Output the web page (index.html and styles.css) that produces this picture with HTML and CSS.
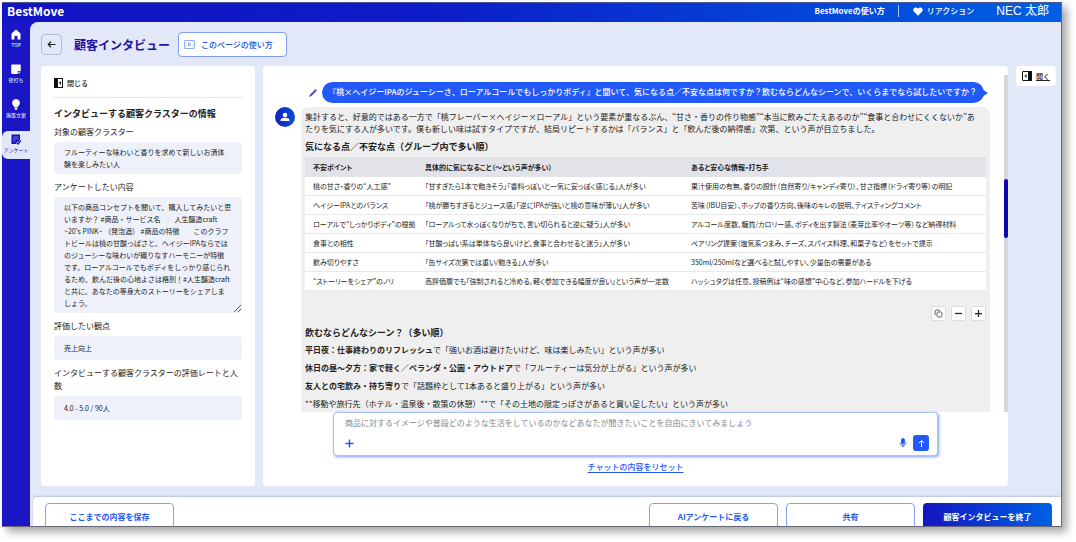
FILE: index.html
```html
<!DOCTYPE html>
<html lang="ja">
<head>
    <meta charset="UTF-8">
    <meta name="viewport" content="width=device-width, initial-scale=1.0">
    <title>顧客インタビュー - BestMove</title>
    <link rel="stylesheet" href="styles.css">
</head>
<body>
    <div class="app">
        <header class="header">
            <span class="logo">BestMove</span>
            <nav class="header-nav">
                <a href="#" class="help-link">BestMoveの使い方</a>
                <a href="#" class="reaction-link">
                    <svg width="10" height="9" viewBox="0 0 20 18" fill="#fff"><path d="M10 17.500 2 9.600C-2.200 4.600 4-2.800 10 3c6-5.800 12.200 1.600 8 6.600z"/></svg>
                    リアクション
                </a>
                <span class="user-name">NEC 太郎</span>
            </nav>
        </header>

        <div class="body">
            <nav class="sidebar">
                <a href="#" class="side-item">
                    <svg width="10" height="11" viewBox="0 0 20 22" fill="#fff"><path d="M10 1 1 9v12h6v-7h6v7h6V9z"/></svg>
                    TOP
                </a>
                <a href="#" class="side-item">
                    <svg width="10" height="11" viewBox="0 0 20 22" fill="#fff"><path d="M2 1h16a1.500 1.500 0 0 1 1.500 1.500V14h-6v6H2A1.500 1.500 0 0 1 .5 18.500v-16A1.500 1.500 0 0 1 2 1z"/><path d="M15 15.500h4.500L15 20z"/></svg>
                    壁打ち
                </a>
                <a href="#" class="side-item">
                    <svg width="10" height="11" viewBox="0 0 20 22" fill="#fff"><path d="M10 0a8 8 0 0 1 4.500 14.500L13 17H7l-1.500-2.500A8 8 0 0 1 10 0z"/><path d="M7.500 18h5v2l-1.500 2H9l-1.500-2z"/></svg>
                    施策立案
                </a>
                <a href="#" class="side-item active">
                    <svg width="10" height="11" viewBox="0 0 20 22"><path d="M1 1h17v12l-6 7H1z" fill="#1510b8"/><path d="M4 6h11M4 10h11M4 14h5" stroke="#8f98e8" stroke-width="1.500"/><path d="m11 17 3 3 6-7" fill="none" stroke="#e2e8f8" stroke-width="5"/><path d="m11 17 3 3 6-7" fill="none" stroke="#1510b8" stroke-width="2.500"/></svg>
                    アンケート
                </a>
            </nav>

            <main class="main">
                <div class="page-head">
                    <button class="back-btn" aria-label="戻る">
                        <svg width="9" height="9" viewBox="0 0 18 18" fill="none" stroke="#222" stroke-width="2.400"><path d="M17 9H3M8 3.500 2.500 9 8 14.500"/></svg>
                    </button>
                    <h1 class="page-title">顧客インタビュー</h1>
                    <button class="guide-btn">
                        <svg width="11" height="9" viewBox="0 0 22 18" fill="none" stroke="#6f8df5" stroke-width="1.500"><rect x="1" y="1" width="20" height="16" rx="1.500"/><path d="M4 1v16M18 1v16" stroke-width="1" stroke-dasharray="2 2"/><path d="m9 6 5 3-5 3z"/></svg>
                        このページの使い方
                    </button>
                </div>

                <div class="columns">
                    <section class="panel info-panel">
                        <button class="close-btn">
                            <svg width="9" height="10" viewBox="0 0 18 20"><rect x="1" y="1" width="16" height="18" fill="none" stroke="#111" stroke-width="2"/><path d="M0 0h8v20H0z" fill="#111"/><path d="m14 6-4 4 4 4z" fill="#111"/></svg>
                            閉じる
                        </button>
                        <h2 class="info-title">インタビューする顧客クラスターの情報</h2>
                        <label class="field-label" for="cluster">対象の顧客クラスター</label>
                        <textarea class="field" id="cluster" rows="2" readonly>フルーティーな味わいと香りを求めて新しいお漬体
験を楽しみたい人</textarea>
                        <label class="field-label" for="content">アンケートしたい内容</label>
                        <textarea class="field resizable" id="content" rows="9">以下の商品コンセプトを聞いて、購入してみたいと思
いますか？ #商品・サービス名　　人生醸造craft
~20’s PINK~ （発泡酒） #商品の特徴　　このクラフ
トビールは桃の甘酸っぱさと、ヘイジーIPAならでは
のジューシーな味わいが織りなすハーモニーが特徴
です。ローアルコールでもボディをしっかり感じられ
るため、飲んだ後の心地よさは格別！#人生醸造craft
と共に、あなたの等身大のストーリーをシェアしま
しょう。</textarea>
                        <label class="field-label" for="viewpoint">評価したい観点</label>
                        <input class="field" id="viewpoint" type="text" value="売上向上">
                        <label class="field-label" for="rate">インタビューする顧客クラスターの評価レートと人数</label>
                        <input class="field" id="rate" type="text" value="4.0 - 5.0 / 90人">
                    </section>

                    <section class="panel chat-panel">
                        <div class="chat-view">
                            <div class="chat-log">
                                <div class="question-row">
                                    <svg width="10" height="10" viewBox="0 0 20 20"><path d="m2 18 2-5L15 2l3 3L7 16z" fill="#5a4fc0"/></svg>
                                    <p class="question">『桃×ヘイジーIPAのジューシーさ、ローアルコールでもしっかりボディ』と聞いて、気になる点／不安な点は何ですか？飲むならどんなシーンで、いくらまでなら試したいですか？</p>
                                </div>
                                <div class="answer-row">
                                    <span class="avatar">
                                        <svg width="10" height="10" viewBox="0 0 20 20" fill="#fff"><circle cx="10" cy="6" r="4.500"/><path d="M1 18v-2c0-3 5-4.500 9-4.500s9 1.500 9 4.500v2z"/></svg>
                                    </span>
                                    <div class="answer">
                                        <p class="summary">集計すると、好意的ではある一方で「桃フレーバー×ヘイジー×ローアル」という要素が重なるぶん、“甘さ・香りの作り物感”“本当に飲みごたえあるのか”“食事と合わせにくくないか”あたりを気にする人が多いです。僕も新しい味は試すタイプですが、結局リピートするかは「バランス」と「飲んだ後の納得感」次第、という声が目立ちました。</p>
                                        <h3>気になる点／不安な点（グループ内で多い順）</h3>
                                        <table class="points">
                                            <thead>
                                                <tr><th>不安ポイント</th><th>具体的に気になること（〜という声が多い）</th><th>あると安心な情報・打ち手</th></tr>
                                            </thead>
                                            <tbody>
                                                <tr><td>桃の甘さ・香りの“人工感”</td><td>「甘すぎたら1本で飽きそう」「香料っぽいと一気に安っぽく感じる」人が多い</td><td>果汁使用の有無、香りの設計（自然寄り/キャンディ寄り）、甘さ指標（ドライ寄り等）の明記</td></tr>
                                                <tr><td>ヘイジーIPAとのバランス</td><td>「桃が勝ちすぎるとジュース感」「逆にIPAが強いと桃の意味が薄い」人が多い</td><td>苦味（IBU目安）、ホップの香り方向、後味のキレの説明、テイスティングコメント</td></tr>
                                                <tr><td>ローアルで“しっかりボディ”の根拠</td><td>「ローアルって水っぽくなりがちで、言い切られると逆に疑う」人が多い</td><td>アルコール度数、糖質/カロリー感、ボディを出す製法（麦芽比率やオーツ等）など納得材料</td></tr>
                                                <tr><td>食事との相性</td><td>「甘酸っぱい系は単体なら良いけど、食事と合わせると迷う」人が多い</td><td>ペアリング提案（塩気系つまみ、チーズ、スパイス料理、和菓子など）をセットで提示</td></tr>
                                                <tr><td>飲み切りやすさ</td><td>「缶サイズ次第では重い/飽きる」人が多い</td><td>350ml/250mlなど選べると試しやすい、少量缶の需要がある</td></tr>
                                                <tr><td>“ストーリーをシェア”のノリ</td><td>高評価層でも「強制されると冷める。軽く参加できる幅度が良い」という声が一定数</td><td>ハッシュタグは任意、投稿例は“味の感想”中心など、参加ハードルを下げる</td></tr>
                                            </tbody>
                                        </table>
                                        <div class="table-tools">
                                            <button aria-label="コピー"><svg width="9" height="9" viewBox="0 0 18 18" fill="none" stroke="#333" stroke-width="1.600"><rect x="6" y="6" width="10" height="10" rx="2.500"/><path d="M4 11.500A2.500 2.500 0 0 1 2 9V4.500A2.500 2.500 0 0 1 4.500 2H9a2.500 2.500 0 0 1 2.500 2"/></svg></button>
                                            <button aria-label="縮小"><svg width="9" height="9" viewBox="0 0 18 18" stroke="#222" stroke-width="2.500"><path d="M2 9h14"/></svg></button>
                                            <button aria-label="拡大"><svg width="9" height="9" viewBox="0 0 18 18" stroke="#222" stroke-width="2.500"><path d="M2 9h14M9 2v14"/></svg></button>
                                        </div>
                                        <h3>飲むならどんなシーン？（多い順）</h3>
                                        <ul class="scenes">
                                            <li><b>平日夜：仕事終わりのリフレッシュ</b>で「強いお酒は避けたいけど、味は楽しみたい」という声が多い</li>
                                            <li><b>休日の昼〜夕方：家で軽く／ベランダ・公園・アウトドア</b>で「フルーティーは気分が上がる」という声が多い</li>
                                            <li><b>友人との宅飲み・持ち寄り</b>で「話題枠として1本あると盛り上がる」という声が多い</li>
                                            <li>**移動や旅行先（ホテル・温泉後・散策の休憩）**で「その土地の限定っぽさがあると買い足したい」という声が多い</li>
                                        </ul>
                                    </div>
                                </div>
                            </div>
                            <div class="scrollbar"><div class="scroll-thumb"></div></div>
                        </div>
                        <form class="composer">
                            <input class="message" type="text" aria-label="メッセージ" placeholder="商品に対するイメージや普段どのような生活をしているのかなどあなたが聞きたいことを自由にきいてみましょう">
                            <div class="composer-tools">
                                <button type="button" class="icon-btn add-btn" aria-label="追加"><svg width="9" height="9" viewBox="0 0 18 18" stroke="#2259f5" stroke-width="2.800"><path d="M1 9h16M9 1v16"/></svg></button>
                                <button type="button" class="icon-btn" aria-label="音声入力"><svg width="8" height="10" viewBox="0 0 16 20" fill="none" stroke="#2259f5" stroke-width="1.800"><rect x="5" y="1" width="6" height="11" rx="3" fill="#2259f5"/><path d="M2 9c0 8 12 8 12 0M8 15v4"/></svg></button>
                                <button type="button" class="send-btn" aria-label="送信"><svg width="9" height="9" viewBox="0 0 18 18" fill="none" stroke="#fff" stroke-width="2"><path d="M9 16V3M4 8l5-5 5 5"/></svg></button>
                            </div>
                        </form>
                        <a href="#" class="reset-link">チャットの内容をリセット</a>
                    </section>

                    <button class="open-btn">
                        <svg width="10" height="10" viewBox="0 0 20 20"><rect x="1" y="1" width="18" height="18" rx="1" fill="none" stroke="#111" stroke-width="2"/><path d="M12 0h8v20h-8z" fill="#111"/><path d="m9 6-4 4 4 4z" fill="#111"/></svg>
                        開く
                    </button>
                </div>

                <footer class="footer">
                    <button class="btn save-btn">ここまでの内容を保存</button>
                    <button class="btn">AIアンケートに戻る</button>
                    <button class="btn">共有</button>
                    <button class="btn finish-btn">顧客インタビューを終了</button>
                </footer>
            </main>
        </div>
    </div>
</body>
</html>
```

FILE: styles.css
```css
* {
    margin: 0;
    padding: 0;
    box-sizing: border-box;
}

body {
    height: 100vh;
    padding: 2px 14px 15px 2px;
    background-color: #fff;
    color: #222;
    font-family: "Noto Sans CJK JP", sans-serif;
    font-size: 8px;
    line-height: 12px;
    overflow: hidden;
}

button,
input,
textarea {
    font: inherit;
    color: inherit;
    border: none;
    background: none;
}

button {
    display: flex;
    align-items: center;
    justify-content: center;
    cursor: pointer;
}

a {
    color: inherit;
    text-decoration: none;
}

svg {
    display: block;
    flex: none;
}

.app {
    height: 100%;
    display: flex;
    flex-direction: column;
    overflow: hidden;
    border-top: 1px solid #4a5a90;
    border-right: 1px solid #667;
    border-bottom: 1px solid #667;
    background: linear-gradient(90deg, #1414c4, #0c1cc8 40%, #0060e4);
    box-shadow: 5px 5px 8px rgba(0, 0, 0, 0.35);
}

/* ヘッダー */
.header {
    height: 19px;
    flex: none;
    display: flex;
    align-items: center;
    justify-content: space-between;
    padding: 0 12px 3px 5px;
    color: #fff;
    font-weight: 500;
}

.logo {
    font-size: 12px;
    line-height: 16px;
    font-weight: bold;
}

.header-nav {
    display: flex;
    align-items: center;
}

.help-link {
    font-weight: bold;
    padding-right: 13px;
    border-right: 1px solid #a8c0f8;
}

.reaction-link {
    display: flex;
    align-items: center;
    gap: 4px;
    padding: 0 22px 0 14px;
}

.user-name {
    font-family: "Liberation Sans", "Noto Sans CJK JP", sans-serif;
    font-size: 12px;
    font-weight: normal;
}

.body {
    flex: 1;
    min-height: 0;
    display: flex;
}

/* サイドバー */
.sidebar {
    width: 28px;
    flex: none;
    display: flex;
    flex-direction: column;
    gap: 7px;
    padding-top: 4px;
    background-color: #1a16c6;
}

.side-item {
    height: 28px;
    display: flex;
    flex-direction: column;
    align-items: center;
    justify-content: center;
    gap: 1px;
    padding-bottom: 2px;
    color: #fff;
    font-size: 5px;
    line-height: 8px;
    white-space: nowrap;
}

.side-item.active {
    color: #1510b8;
    background-color: #e2e8f8;
    border-radius: 6px 0 0 6px;
}

/* メイン */
.main {
    flex: 1;
    min-width: 0;
    display: flex;
    flex-direction: column;
    background-color: #e2e8f8;
    border-top-left-radius: 8px;
}

.page-head {
    flex: none;
    display: flex;
    align-items: center;
    padding: 10px 11px 9px;
}

.back-btn {
    width: 21px;
    height: 21px;
    border: 1px solid #b8bccb;
    border-radius: 4px;
}

.page-title {
    margin: 0 8px 0 12px;
    color: #1d14a8;
    font-size: 12px;
    line-height: 18px;
}

.guide-btn {
    height: 25px;
    gap: 6px;
    padding: 0 13px 0 5px;
    color: #2150e0;
    font-weight: 500;
    background-color: #fff;
    border: 1px solid #7f9df5;
    border-radius: 4px;
}

.columns {
    flex: 1;
    min-height: 0;
    display: flex;
    align-items: stretch;
    gap: 8px;
    padding: 0 5px 11px 11px;
}

.panel {
    background-color: #fff;
    border-radius: 4px;
}

.info-panel {
    width: 214px;
    flex: none;
    display: flex;
    flex-direction: column;
    padding: 11px 13px;
}

.close-btn {
    gap: 4px;
    justify-content: flex-start;
    padding-bottom: 8px;
    border-bottom: 1px solid #e4e5ea;
    font-size: 7px;
    font-weight: 500;
}

.info-title {
    margin: 9px 0 4px;
    font-size: 9px;
    line-height: 14px;
}

.field-label {
    margin-bottom: 4px;
    line-height: 13px;
}

.field {
    flex: none;
    height: 24px;
    margin-bottom: 6px;
    padding: 4px 8px 4px 10px;
    font-size: 7px;
    line-height: 12px;
    background-color: #eef1fa;
    border-radius: 4px;
}

textarea.field {
    height: auto;
    white-space: pre;
    overflow: hidden;
    resize: none;
}

textarea.resizable {
    resize: vertical;
}

/* チャット */
.chat-panel {
    flex: 1;
    min-width: 0;
    display: flex;
    flex-direction: column;
    padding-top: 9px;
}

.chat-view {
    flex: 1;
    min-height: 0;
    display: flex;
}

.chat-log {
    flex: 1;
    min-width: 0;
    overflow: hidden;
    padding: 7px 14px 0 12px;
}

.question-row {
    display: flex;
    align-items: center;
    justify-content: flex-end;
    gap: 4px;
    padding-right: 6px;
    margin-bottom: 4px;
}

.question {
    position: relative;
    padding: 4px 7px 5px 6px;
    color: #fff;
    font-weight: 500;
    white-space: nowrap;
    background-color: #2259f8;
    border-radius: 11px;
}

.question::after {
    content: "";
    position: absolute;
    top: 7px;
    right: -4px;
    border-left: 6px solid #2259f8;
    border-top: 4px solid transparent;
    border-bottom: 4px solid transparent;
}

.answer-row {
    display: flex;
    align-items: flex-start;
    gap: 6px;
}

.avatar {
    width: 20px;
    height: 20px;
    flex: none;
    display: flex;
    align-items: center;
    justify-content: center;
    background: linear-gradient(90deg, #1320bc, #0b50d8);
    border-radius: 50%;
}

.answer {
    flex: 1;
    min-width: 0;
    padding: 4px 4px 40px;
    background-color: #efefef;
    border-radius: 8px;
}

.summary {
    padding-right: 8px;
}

.answer h3 {
    margin-top: 4px;
    font-size: 9px;
    line-height: 16px;
}

.points {
    width: 100%;
    margin-top: 2px;
    table-layout: fixed;
    border-collapse: collapse;
    font-size: 7px;
    line-height: 12px;
    font-feature-settings: "palt";
    background-color: #fff;
}

.points th,
.points td {
    padding: 3px 8px;
    text-align: left;
    white-space: nowrap;
}

.points th:first-child {
    width: 112px;
}

.points th:nth-child(2) {
    width: 266px;
}

.points th {
    padding: 4px 8px;
    background-color: #e2e3e8;
}

.points td {
    border-bottom: 1px solid #e9e9ec;
}

.table-tools {
    display: flex;
    justify-content: flex-end;
    gap: 5px;
    margin-top: 15px;
}

.table-tools button {
    width: 15px;
    height: 15px;
    background-color: #fff;
    border: 1px solid #ddd;
    border-radius: 2px;
}

.scenes {
    list-style: none;
    line-height: 18px;
}

.scrollbar {
    width: 4px;
    flex: none;
    background-color: #d6d8e0;
}

.scroll-thumb {
    height: 59px;
    margin-top: 104px;
    background-color: #0d08b4;
    border-radius: 2px;
}

.composer {
    margin: 0 70px;
    padding: 4px 8px 4px 11px;
    background-color: #fff;
    border: 1px solid #a9c2fb;
    border-radius: 4px;
    box-shadow: 1px 1px 3px #7ea2f0;
}

.message {
    display: block;
    width: 100%;
    height: 12px;
    outline: none;
}

.message::placeholder {
    color: #85878c;
    opacity: 1;
}

.composer-tools {
    display: flex;
    align-items: center;
    gap: 6px;
    margin-top: 6px;
}

.add-btn {
    margin-right: auto;
}

.send-btn {
    width: 16px;
    height: 16px;
    background-color: #2259f8;
    border-radius: 3px;
}

.reset-link {
    align-self: center;
    margin: 5px 0 13px;
    color: #2259f5;
    font-weight: 500;
    text-decoration: underline;
    text-underline-offset: 2px;
}

.open-btn {
    align-self: flex-start;
    width: 40px;
    height: 20px;
    gap: 4px;
    font-size: 7px;
    font-weight: 500;
    text-decoration: underline;
    background-color: #fff;
    border-radius: 4px;
}

/* フッター */
.footer {
    height: 29px;
    flex: none;
    display: flex;
    align-items: flex-start;
    gap: 8px;
    margin-left: 3px;
    padding: 6px 9px 0 12px;
    overflow: hidden;
    background-color: #fff;
    border-top-left-radius: 4px;
    box-shadow: 0 -1px 2px #b9bfdf;
}

.btn {
    width: 129px;
    height: 28px;
    flex: none;
    color: #2259f5;
    font-weight: bold;
    background-color: #fff;
    border: 1px solid #86a0f5;
    border-radius: 4px;
}

.save-btn {
    margin-right: auto;
}

.finish-btn {
    color: #fff;
    border: none;
    background: linear-gradient(90deg, #1414c0, #0060e4);
}
```
